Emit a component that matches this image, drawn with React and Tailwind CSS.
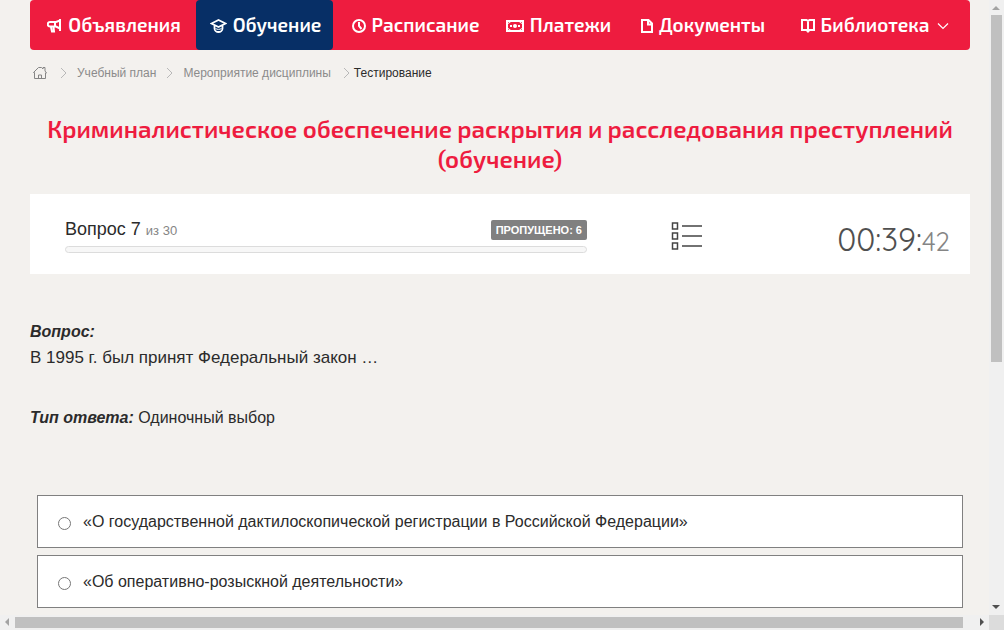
import React, { useState } from 'react';

const navItems = [
    { id: 'ads', label: 'Объявления', icon: MegaphoneIcon },
    { id: 'study', label: 'Обучение', icon: HatIcon },
    { id: 'schedule', label: 'Расписание', icon: ClockIcon },
    { id: 'payments', label: 'Платежи', icon: MoneyIcon },
    { id: 'documents', label: 'Документы', icon: FileIcon },
    { id: 'library', label: 'Библиотека', icon: BookIcon, dropdown: true },
];

const answers = [
    { id: 'a1', text: '«О государственной дактилоскопической регистрации в Российской Федерации»' },
    { id: 'a2', text: '«Об оперативно-розыскной деятельности»' },
];

function MegaphoneIcon() {
    return (
        <svg width="15" height="16" viewBox="0 0 15 16" fill="none" stroke="currentColor" strokeWidth="2" className="mt-0.5">
            <path d="M13 1v12M13 2.500L9 4H3a2 2 0 0 0 0 4.500h6l4 2M8 4v4.500M4 9l1 4.500h2L6.500 9" />
        </svg>
    );
}

function HatIcon() {
    return (
        <svg width="17" height="16" viewBox="0 0 17 16" fill="none" stroke="currentColor" strokeWidth="1.800" className="mt-0.5">
            <path d="M1.500 5.500L8.500 2l7 3.500-7 3.500zM4.500 7.500v3c0 2 2 3.500 4 3.500s4-1.500 4-3.500v-3" />
            <path d="M5.500 10.500c2 1.200 4 1.200 6 0" strokeWidth="1" />
        </svg>
    );
}

function ClockIcon() {
    return (
        <svg width="14" height="16" viewBox="0 0 14 16" fill="none" stroke="currentColor" strokeWidth="2" className="mt-0.5">
            <circle cx="7" cy="8" r="6" />
            <path d="M7 4v4l2.500 3" />
        </svg>
    );
}

function MoneyIcon() {
    return (
        <svg width="18" height="16" viewBox="0 0 18 16" fill="none" stroke="currentColor" strokeWidth="2" className="mt-0.5">
            <rect x="1" y="3" width="16" height="10" />
            <path d="M2 5.500L4.500 4M16 5.500L13.500 4M2 10.500L4.500 12M16 10.500L13.500 12" strokeWidth="1" />
            <circle cx="9" cy="8" r="2" fill="currentColor" stroke="none" />
            <path d="M4 8h2M12 8h2" />
        </svg>
    );
}

function FileIcon() {
    return (
        <svg width="12" height="16" viewBox="0 0 12 16" fill="none" stroke="currentColor" strokeWidth="2" className="mt-0.5">
            <path d="M1 2h6.500L11 5.500V14H1zM7 2v4.500h4" />
        </svg>
    );
}

function BookIcon() {
    return (
        <svg width="14" height="16" viewBox="0 0 14 16" fill="none" stroke="currentColor" strokeWidth="2" className="mt-0.5">
            <path d="M1 2h4.500L7 3l1.500-1H13v10H8.500L7 13.500 5.500 12H1zM7 3v10" />
        </svg>
    );
}

function HomeIcon() {
    return (
        <svg width="14" height="14" viewBox="0 0 14 14" fill="none" stroke="#858585">
            <path d="M1.500 12.500v-6h-1l5-5h3L10 3V1.500h2V5l1.500 2h-1v5.500zM5.500 12.500V9h3v3.500" />
        </svg>
    );
}

function Separator() {
    return (
        <svg width="7" height="12" viewBox="0 0 7 12" fill="none" stroke="#b8b8b8">
            <path d="M1 1l5 5-5 5" />
        </svg>
    );
}

function ListIcon() {
    return (
        <svg width="32" height="30" viewBox="0 0 32 30" fill="none" stroke="#444444" strokeWidth="1.500">
            <path d="M1.500 2h5v6h-5zM1.500 12h5v6h-5zM1.500 22h5v6h-5zM11 5h20M11 15h20M11 25h20" />
        </svg>
    );
}

function Navbar() {
    const [active, setActive] = useState('study');

    return (
        <nav className="grid h-[50px] grid-cols-[166fr_137fr_163fr_123fr_166fr_178fr_7fr] rounded bg-[#ee1c3f] font-['Exo_2','Open_Sans',sans-serif] text-[19px] font-semibold text-white">
            {navItems.map(({ id, label, icon: Icon, dropdown }) => (
                <a
                    key={id}
                    href={`#${id}`}
                    onClick={() => setActive(id)}
                    className={`flex items-center justify-center gap-1.5 rounded pl-0.5 whitespace-nowrap ${active === id ? 'bg-[#072f66]' : ''}`}
                >
                    <Icon />
                    {label}
                    {dropdown && (
                        <svg width="12" height="8" viewBox="0 0 12 8" fill="none" stroke="currentColor" strokeWidth="1.200" className="mt-0.5 ml-0.5">
                            <path d="M1 1.500l5 5 5-5" />
                        </svg>
                    )}
                </a>
            ))}
        </nav>
    );
}

function Breadcrumbs() {
    return (
        <div className="mt-4 flex h-[14px] items-center gap-2.5 pl-[3px] text-[12px] text-[#8b8b8b]">
            <a href="#home" aria-label="Главная" className="mr-[3px]">
                <HomeIcon />
            </a>
            <Separator />
            <a href="#plan">Учебный план</a>
            <Separator />
            <a href="#event">Мероприятие дисциплины</a>
            <span className="flex items-center gap-1 pl-0.5 text-[#2b2b2b]">
                <Separator />
                Тестирование
            </span>
        </div>
    );
}

function StatusPanel() {
    return (
        <section className="mt-5 grid h-20 grid-cols-[592fr_130fr_218fr] items-center bg-white">
            <div className="px-[35px] pt-0.5">
                <div className="flex items-center justify-between">
                    <div className="text-[18px] leading-6 text-[#2b2b2b]">
                        Вопрос 7 <span className="text-[13px] text-[#858585]">из 30</span>
                    </div>
                    <span className="rounded-xs bg-[#808080] px-[5px] text-[11px] leading-5 font-bold text-white">
                        ПРОПУЩЕНО: 6
                    </span>
                </div>
                <div
                    role="progressbar"
                    aria-label="Ход тестирования"
                    aria-valuenow={0}
                    className="mt-[3px] h-[7px] rounded-full border border-[#dcdcdc] bg-[#f7f7f7]"
                ></div>
            </div>
            <button type="button" aria-label="Список вопросов" className="justify-self-center pt-1">
                <ListIcon />
            </button>
            <div className="justify-self-end pt-3 pr-5 font-['Quicksand','Lato',sans-serif] text-[32px] leading-10 font-normal text-[#505050]">
                00:39:<span className="text-[26px] text-[#858585]">42</span>
            </div>
        </section>
    );
}

function Answers() {
    const [selected, setSelected] = useState('');

    return (
        <div className="mt-16 flex flex-col gap-[7px] px-[7px]">
            {answers.map((answer) => (
                <label
                    key={answer.id}
                    htmlFor={answer.id}
                    className="flex h-[53px] shrink-0 items-center gap-3 border border-[#808080] bg-white pl-5 text-base"
                >
                    <input
                        id={answer.id}
                        type="radio"
                        name="answer"
                        checked={selected === answer.id}
                        onChange={() => setSelected(answer.id)}
                        className="mt-1 size-[13px]"
                    />
                    {answer.text}
                </label>
            ))}
        </div>
    );
}

function VerticalScrollbar() {
    return (
        <div className="flex flex-col items-center bg-[#f0f0f0]">
            <svg width="15" height="15" viewBox="0 0 15 15" fill="#a3a3a3">
                <path d="M3 10l4-4 4 4z" />
            </svg>
            <div className="w-full flex-1 px-0.5">
                <div className="h-[59.3%] bg-[#c0c0c0]"></div>
            </div>
            <svg width="15" height="15" viewBox="0 0 15 15" fill="#505050">
                <path d="M3 5l4 4 4-4z" />
            </svg>
        </div>
    );
}

function HorizontalScrollbar() {
    return (
        <div className="flex items-center bg-[#f0f0f0]">
            <svg width="15" height="15" viewBox="0 0 15 15" fill="#a3a3a3">
                <path d="M9 3L5 7l4 4z" />
            </svg>
            <div className="h-full flex-1 py-0.5">
                <div className="h-full w-[98.9%] bg-[#c0c0c0]"></div>
            </div>
            <svg width="15" height="15" viewBox="0 0 15 15" fill="#505050">
                <path d="M6 3l4 4-4 4z" />
            </svg>
        </div>
    );
}

function App() {
    return (
        <div className="grid h-screen grid-cols-[1fr_15px] grid-rows-[1fr_15px] overflow-hidden bg-[#f3f1ee] font-['Liberation_Sans',Arial,sans-serif] text-[#2b2b2b]">
            <main className="min-h-0 min-w-0 overflow-hidden pr-[19px] pl-[30px]">
                <Navbar />
                <Breadcrumbs />
                <h1 className="mt-[34px] text-center font-['Exo_2','Open_Sans',sans-serif] text-[24px] leading-[30px] font-semibold text-[#ee1c3f]">
                    Криминалистическое обеспечение раскрытия и расследования преступлений (обучение)
                </h1>
                <StatusPanel />
                <div className="mt-[45px] text-base leading-[26px]">
                    <p className="font-bold italic">Вопрос:</p>
                    <p className="text-[17px]">В 1995 г. был принят Федеральный закон …</p>
                    <p className="mt-[34px]">
                        <span className="font-bold italic">Тип ответа:</span> Одиночный выбор
                    </p>
                </div>
                <Answers />
            </main>
            <VerticalScrollbar />
            <HorizontalScrollbar />
            <div className="bg-[#dcdcdc]"></div>
        </div>
    );
}

export default App;
